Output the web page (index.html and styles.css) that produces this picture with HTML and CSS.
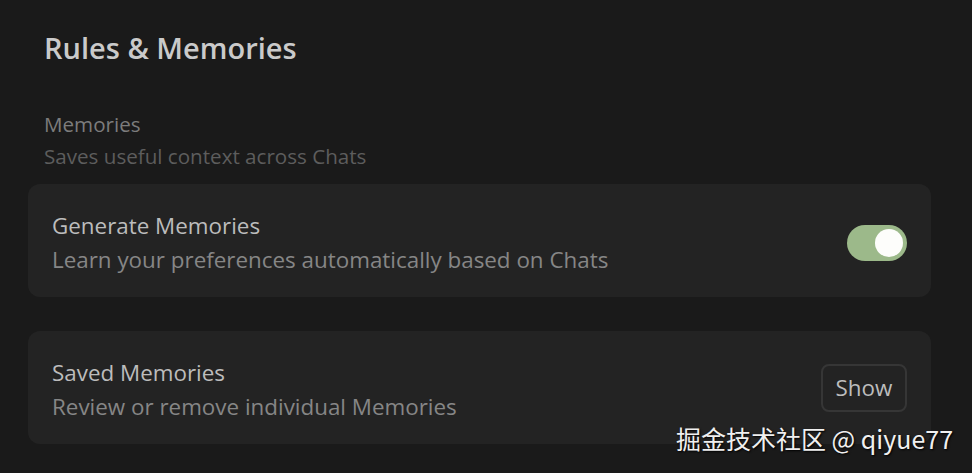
FILE: index.html
```html
<!DOCTYPE html>
<html>
<head>
<meta charset="utf-8">
<link rel="stylesheet" href="styles.css">
</head>
<body>
<div class="page">
  <h1 class="title">Rules &amp; Memories</h1>
  <div class="section-head">
    <div class="section-name">Memories</div>
    <div class="section-desc">Saves useful context across Chats</div>
  </div>
  <div class="card">
    <div class="card-text">
      <div class="card-title">Generate Memories</div>
      <div class="card-desc">Learn your preferences automatically based on Chats</div>
    </div>
    <div class="toggle"><div class="knob"></div></div>
  </div>
  <div class="card card-second">
    <div class="card-text">
      <div class="card-title">Saved Memories</div>
      <div class="card-desc">Review or remove individual Memories</div>
    </div>
    <button class="btn">Show</button>
  </div>
</div>
<div class="watermark">掘金技术社区 @ qiyue77</div>
</body>
</html>
```
FILE: styles.css
```css
html, body {
  margin: 0;
  padding: 0;
  background: #1a1a1a;
  width: 972px;
  height: 473px;
  overflow: hidden;
  font-family: "Open Sans", "Noto Sans", sans-serif;
}
.page {
  padding: 28px 41px 0 28px;
}
.title {
  margin: 0 0 0 16px;
  font-size: 29px;
  font-weight: 600;
  color: #cacaca;
  line-height: 40px;
}
.section-head {
  margin: 40px 0 0 16px;
}
.section-name {
  font-size: 20.6px;
  color: #7c7c7c;
  line-height: 32px;
}
.section-desc {
  font-size: 20.6px;
  color: #5d5d5d;
  line-height: 32px;
}
.card {
  margin-top: 12px;
  background: #232323;
  border-radius: 12px;
  height: 113px;
  box-sizing: border-box;
  padding: 0 24px;
  display: flex;
  align-items: center;
  justify-content: space-between;
}
.card-second {
  margin-top: 34px;
}
.card-text {
  padding-top: 4px;
}
.card-title {
  font-size: 22.4px;
  color: #bcbcbc;
  line-height: 34px;
}
.card-desc {
  font-size: 22.4px;
  color: #868686;
  line-height: 34px;
}
.toggle {
  width: 60px;
  height: 36px;
  border-radius: 18px;
  background: #9cb98a;
  position: relative;
  margin-top: 4px;
}
.knob {
  position: absolute;
  right: 4px;
  top: 4px;
  width: 28px;
  height: 28px;
  border-radius: 50%;
  background: #fdfdfb;
}
.btn {
  width: 86px;
  height: 48px;
  border: 2px solid #363636;
  border-radius: 8px;
  background: transparent;
  color: #bdbdbd;
  font-family: "Open Sans", "Noto Sans", sans-serif;
  font-size: 22.4px;
  padding: 0;
}
.watermark {
  position: absolute;
  left: 676px;
  top: 420px;
  font-family: "Noto Sans CJK SC", sans-serif;
  font-size: 25px;
  color: #f0f0f0;
  text-shadow: 1px 1px 2px #000;
}
```
